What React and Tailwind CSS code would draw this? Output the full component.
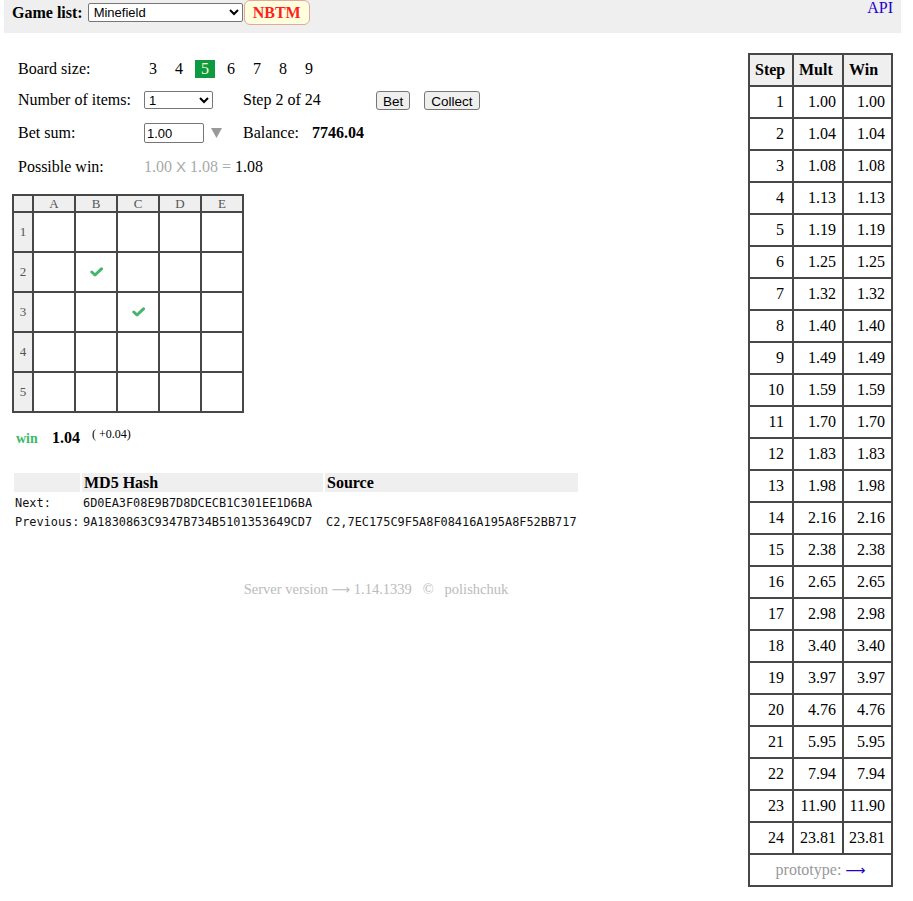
import React from 'react';

const serif = { fontFamily: '"Liberation Serif", "Times New Roman", serif' };
const sans = { fontFamily: '"Liberation Sans", Arial, sans-serif' };
const mono = { fontFamily: '"DejaVu Sans Mono", "Liberation Mono", monospace' };
const arrow = { fontFamily: '"DejaVu Sans", sans-serif' };

const mults = [
  '1.00', '1.04', '1.08', '1.13', '1.19', '1.25', '1.32', '1.40', '1.49', '1.59', '1.70', '1.83',
  '1.98', '2.16', '2.38', '2.65', '2.98', '3.40', '3.97', '4.76', '5.95', '7.94', '11.90', '23.81',
];

const cols = ['A', 'B', 'C', 'D', 'E'];
const checks = { '2-B': true, '3-C': true }; // opened cells

const Check = () => (
  <svg width="13" height="10" viewBox="0 0 13 10">
    <polyline points="1.8,5 5,8 11.5,1.8" fill="none" stroke="#45b56d" strokeWidth="3" strokeLinecap="round" strokeLinejoin="round" />
  </svg>
);

const Board = () => (
  <div className="grid grid-cols-[18px_repeat(5,40px)] grid-rows-[15px_repeat(5,38px)] gap-[2px] p-[2px] bg-[#474747] w-fit">
    <div className="bg-[#efefef]" />
    {cols.map(c => (
      <div key={c} className="bg-[#efefef] text-[13px] leading-[15px] text-[#555] text-center">{c}</div>
    ))}
    {[1, 2, 3, 4, 5].map(r => (
      <React.Fragment key={r}>
        <div className="bg-[#efefef] text-[13px] text-[#555] flex items-center justify-center">{r}</div>
        {cols.map(c => (
          <div key={c} className="bg-white flex items-center justify-center">
            {checks[`${r}-${c}`] && <Check />}
          </div>
        ))}
      </React.Fragment>
    ))}
  </div>
);

const StepTable = () => (
  <div className="grid grid-cols-[42px_48px_47px] auto-rows-[30px] gap-[2px] p-[2px] bg-[#474747] text-[16px] text-black">
    <div className="bg-[#efefef] font-bold flex items-center pl-[5px]">Step</div>
    <div className="bg-[#efefef] font-bold flex items-center pl-[5px]">Mult</div>
    <div className="bg-[#efefef] font-bold flex items-center pl-[5px]">Win</div>
    {mults.map((m, i) => (
      <React.Fragment key={i}>
        <div className="bg-white flex items-center justify-end pr-[8px]">{i + 1}</div>
        <div className="bg-white flex items-center justify-end pr-[6px]">{m}</div>
        <div className="bg-white flex items-center justify-end pr-[6px]">{m}</div>
      </React.Fragment>
    ))}
    <div className="col-span-3 bg-white flex items-center justify-center text-[#999]">
      prototype:&nbsp;<span className="text-[#2200cc] text-[14px]" style={arrow}>⟶</span>
    </div>
  </div>
);

const App = () => {
  return (
    <div className="w-[913px] min-h-[901px] bg-white text-black" style={serif}>
      <div className="ml-[4px] mr-[12px] h-[33px] bg-[#efefef] flex items-start pl-[8px] pr-[8px]">
        <div className="flex items-center h-[25px]">
          <span className="font-bold text-[16px] mr-[5px]">Game list:</span>
          <select className="w-[155px] h-[19px] border border-[#767676] rounded-[2px] bg-white text-[13px] px-[1px]" style={sans} defaultValue="Minefield">
            <option>Minefield</option>
          </select>
          <span className="ml-[1px] h-[25px] px-[8px] flex items-center bg-[#ffffdd] border border-[#e0a8a0] rounded-[6px] text-[#ff1f1f] font-bold text-[16px]">NBTM</span>
        </div>
        <a className="ml-auto text-[16px] leading-[15px] text-[#2200cc]">API</a>
      </div>

      <div className="flex pt-[20px] pr-[20px]">
        <div className="flex-1 pl-[4px] flex flex-col">
          <div className="pl-[8px]">
            <div className="pl-[6px] text-[16px]">
              <div className="flex items-center h-[31px]">
                <span className="w-[122px]">Board size:</span>
                {[3, 4, 5, 6, 7, 8, 9].map(n => (
                  <span key={n} className="w-[26px] flex justify-center">
                    {n === 5 ? (
                      <span className="bg-[#0e9a40] text-[#ffffcc] px-[6px] leading-[18px]">{n}</span>
                    ) : n}
                  </span>
                ))}
              </div>
              <div className="flex items-center h-[32px]">
                <span className="w-[126px]">Number of items:</span>
                <div className="w-[99px]">
                  <select className="w-[69px] h-[18px] border border-[#767676] rounded-[2px] bg-white text-[13px]" style={sans} defaultValue="1">
                    <option>1</option>
                  </select>
                </div>
                <span className="w-[133px]">Step 2 of 24</span>
                <button className="h-[19px] px-[6px] border border-[#767676] rounded-[3px] bg-[#efefef] text-[13.5px]" style={sans}>Bet</button>
                <button className="ml-[14px] h-[19px] px-[6px] border border-[#767676] rounded-[3px] bg-[#efefef] text-[13.5px]" style={sans}>Collect</button>
              </div>
              <div className="flex items-center h-[33px] pt-[1px]">
                <span className="w-[126px]">Bet sum:</span>
                <div className="w-[99px] flex items-center">
                  <input className="w-[60px] h-[20px] border border-[#767676] rounded-[2px] px-[2px] text-[13px]" style={sans} defaultValue="1.00" />
                  <svg className="ml-[7px]" width="11" height="10" viewBox="0 0 11 10">
                    <polygon points="0,0 11,0 5.5,10" fill="#999" />
                  </svg>
                </div>
                <span className="w-[69px]">Balance:</span>
                <span className="font-bold">7746.04</span>
              </div>
              <div className="flex items-center h-[35px]">
                <span className="w-[126px]">Possible win:</span>
                <span className="text-[#aaa]">1.00 <span style={sans} className="text-[15px]">X</span> 1.08 = </span>
                <span>&nbsp;1.08</span>
              </div>
            </div>

            <div className="mt-[10px]">
              <Board />
            </div>

            <div className="mt-[13px] h-[24px] flex items-center pl-[4px]">
              <span className="text-[#3dba6a] font-bold text-[14px] w-[36px]">win</span>
              <span className="font-bold text-[16px] w-[40px]">1.04</span>
              <span className="text-[12px] -mt-[8px]">( +0.04)</span>
            </div>

            <div className="mt-[23px] pl-[2px]">
              <div className="grid grid-cols-[66px_241px_253px] gap-x-[2px] h-[19px] text-[16px] font-bold">
                <div className="bg-[#efefef]" />
                <div className="bg-[#efefef] pl-[2px] leading-[19px]">MD5 Hash</div>
                <div className="bg-[#efefef] pl-[2px] leading-[19px]">Source</div>
              </div>
              <div className="mt-[2px] text-[11.9px] text-[#111]" style={mono}>
                <div className="grid grid-cols-[68px_243px_253px] h-[19px] items-center">
                  <span className="pl-[1px]">Next:</span>
                  <span className="pl-[1px]">6D0EA3F08E9B7D8DCECB1C301EE1D6BA</span>
                  <span />
                </div>
                <div className="grid grid-cols-[68px_243px_253px] h-[19px] items-center">
                  <span className="pl-[1px]">Previous:</span>
                  <span className="pl-[1px]">9A1830863C9347B734B5101353649CD7</span>
                  <span className="pl-[1px]">C2,7EC175C9F5A8F08416A195A8F52BB717</span>
                </div>
              </div>
            </div>
          </div>

          <div className="mt-[47px] text-center text-[14.5px] leading-[20px] text-[#bbb]">
            Server version <span style={arrow} className="text-[13px]">⟶</span> 1.14.1339 &nbsp; © &nbsp; polishchuk
          </div>
        </div>

        <div className="w-fit">
          <StepTable />
        </div>
      </div>
    </div>
  );
};

export default App;
